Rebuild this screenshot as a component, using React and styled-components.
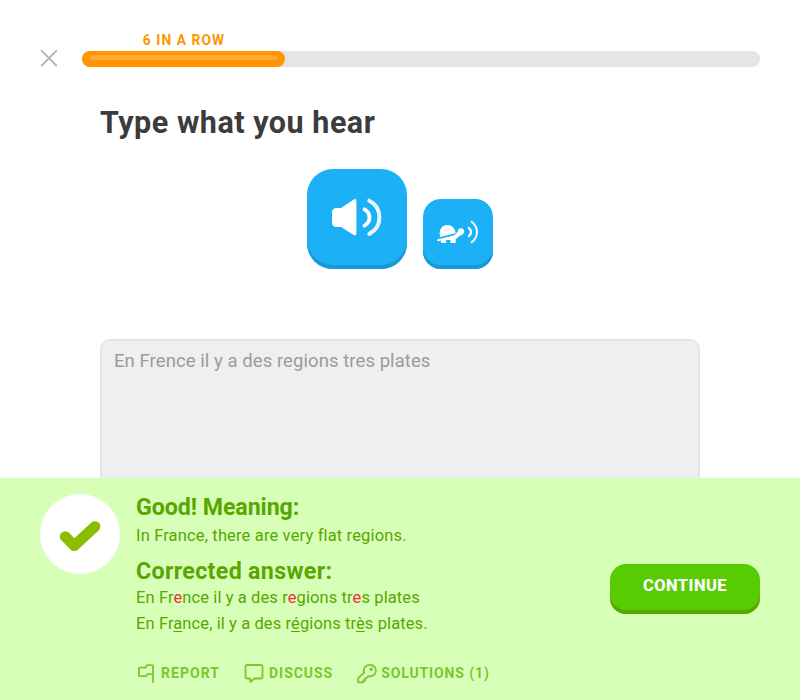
import React from "react";
import styled, { createGlobalStyle } from "styled-components";

const GlobalStyle = createGlobalStyle`
  * { box-sizing: border-box; }
  body { margin: 0; background: #fff; font-family: Roboto, "Liberation Sans", sans-serif; }
  button { border: 0; padding: 0; font-family: inherit; cursor: pointer; }
  h1, h2, p { margin: 0; white-space: nowrap; }
`;

const Page = styled.div`
  width: 800px;
  height: 700px;
  display: flex;
  flex-direction: column;
  overflow: hidden;
`;

const Header = styled.header`
  flex: none;
  display: flex;
  align-items: flex-end;
  gap: 24px;
  height: 67px;
  padding: 0 40px;
`;

const CloseButton = styled.button`
  width: 18px;
  height: 18px;
  background: none;
  svg { display: block; }
`;

const Progress = styled.div`
  flex: 1;
`;

const Streak = styled.div`
  width: 203px;
  padding: 0 0 3px 1px;
  text-align: center;
  font-size: 13.8px;
  line-height: 16px;
  font-weight: 700;
  letter-spacing: 1.08px;
  color: #ff9600;
`;

const Track = styled.div`
  height: 16px;
  border-radius: 8px;
  background: #e5e5e5;
`;

const Fill = styled.div`
  width: 203px;
  height: 16px;
  padding: 4px 8px;
  border-radius: 8px;
  background: #ff9600;
`;

const Shine = styled.div`
  height: 5px;
  border-radius: 3px;
  background: #ffab33;
`;

const Main = styled.main`
  flex: 1;
  min-height: 0;
  overflow: hidden;
  padding: 36px 100px 0;
`;

const Title = styled.h1`
  font-size: 30.5px;
  line-height: 40px;
  font-weight: 700;
  letter-spacing: 0.52px;
  color: #3c3c3c;
`;

const Speakers = styled.div`
  display: flex;
  justify-content: center;
  align-items: flex-end;
  gap: 16px;
  margin: 26px 0 70px;
`;

const SpeakerButton = styled.button`
  width: ${(p) => p.$size}px;
  height: ${(p) => p.$size}px;
  border-radius: ${(p) => p.$radius}px;
  background: #1cb0f6;
  box-shadow: inset 0 -4px 0 #1899d6;
  svg { display: block; }
`;

const Answer = styled.div`
  height: 200px;
  padding: 8px 12px;
  border: 2px solid #e5e5e5;
  border-radius: 10px;
  background: #efefef;
  color: #9b9b9b;
  font-size: 18.5px;
  line-height: 24px;
  letter-spacing: 0.07px;
  white-space: nowrap;
`;

const Feedback = styled.footer`
  flex: none;
  display: flex;
  height: 222px;
  padding: 16px 40px 0;
  background: #d7ffb8;
  color: #58a700;
`;

const Badge = styled.div`
  flex: none;
  width: 80px;
  height: 80px;
  margin-right: 16px;
  border-radius: 50%;
  background: #fff;
  svg { display: block; }
`;

const Details = styled.div`
  flex: 1;
`;

const Heading = styled.h2`
  font-size: 23.2px;
  line-height: ${(p) => p.$height}px;
  font-weight: 700;
  letter-spacing: ${(p) => p.$spacing}px;
`;

const Line = styled.p`
  font-size: 16.5px;
  line-height: 26px;
  letter-spacing: ${(p) => p.$spacing}px;
  padding-top: ${(p) => p.$before || 0}px;
  margin-bottom: ${(p) => p.$after || 0}px;
`;

const Wrong = styled.span`
  color: #f52f3a;
`;

const Fixed = styled.span`
  text-decoration: underline;
  text-decoration-thickness: 1px;
  text-underline-offset: 2px;
`;

const Actions = styled.div`
  display: flex;
  gap: 24px;
  margin-top: 26px;
`;

const Action = styled.button`
  display: flex;
  align-items: center;
  gap: ${(p) => p.$gap}px;
  height: 20px;
  background: none;
  color: #7ac62f;
  font-size: 14px;
  line-height: 20px;
  font-weight: 700;
  letter-spacing: ${(p) => p.$spacing}px;
  white-space: nowrap;
  svg { display: block; flex: none; overflow: visible; }
`;

const ContinueButton = styled.button`
  flex: none;
  width: 150px;
  height: 50px;
  margin-top: 70px;
  padding-bottom: 8px;
  border-radius: 16px;
  background: #58cc02;
  box-shadow: inset 0 -4px 0 #58a700;
  color: #fff;
  font-size: 16.5px;
  font-weight: 800;
  letter-spacing: 0.4px;
`;

const stroke = { fill: "none", stroke: "currentColor", strokeWidth: 1.8, strokeLinecap: "round", strokeLinejoin: "round" };

const CloseIcon = () => (
  <svg width="18" height="18" viewBox="0 0 18 18">
    <path d="M1.7 1.9 16.3 16.5M16.3 1.9 1.7 16.5" stroke="#b7b7b7" strokeWidth="2" strokeLinecap="round" />
  </svg>
);

const SpeakerIcon = () => (
  <svg width="100" height="100" viewBox="0 0 100 100" fill="none">
    <path d="M29 39h5l12.4-8.3q3-1.8 3 1.3v32.3q0 3.3-3 1.5L34 58h-5q-4-.5-4-4.5v-10q0-4 4-4.5z" fill="#fff" />
    <path d="M57.5 40.300c6.600 3.700 6.600 12.700 0 16.400" stroke="#fff" strokeWidth="3.800" strokeLinecap="round" />
    <path d="M62.300 31.700c13.500 6.800 13.500 26.400 0 33.200" stroke="#e8f7fe" strokeWidth="4" strokeLinecap="round" />
  </svg>
);

const TurtleIcon = () => (
  <svg width="70" height="70" viewBox="0 0 70 70" fill="none">
    <path d="M17.2 38C15.2 31.200 18.800 26 24.200 26c4.700 0 7.800 3.200 8.500 8.300z" fill="#fff" />
    <path d="M15.200 41.200 33 37.300" stroke="#fff" strokeWidth="2.200" strokeLinecap="round" />
    <path d="M18 40.200 31.500 36.300 36.500 31 40 35.200 36 37.300c-.8 1.300-1.900 2.100-3.300 2.600V44h-5.200v-3h-4.300v3H18z" fill="#fff" />
    <circle cx="38" cy="32.300" r="3.100" fill="#fff" />
    <path d="M45.800 29c3 2.200 3 5.900 0 8.100" stroke="#fff" strokeWidth="2.200" strokeLinecap="round" />
    <path d="M48.700 22.800c7 5.200 7 15.200 0 20.400" stroke="#e8f7fe" strokeWidth="2.100" strokeLinecap="round" />
  </svg>
);

const CheckIcon = () => (
  <svg width="80" height="80" viewBox="0 0 80 80">
    <path d="M25.2 42.5 34.2 51.7 55 32.5" fill="none" stroke="#8abd00" strokeWidth="10.700" strokeLinecap="round" strokeLinejoin="round" />
  </svg>
);

const FlagIcon = () => (
  <svg width="21" height="20" viewBox="0 0 21 20">
    <path d="M17 19V3.200q0-1-1-1h-4.600q-1 0-1.200 1l-.3 1.500H3.900q-1 0-1 1v6.500q0 1 1 1h5.700q.9 0 1.200-.8l.5-1.200H17" {...stroke} />
  </svg>
);

const BubbleIcon = () => (
  <svg width="20" height="20" viewBox="0 0 20 20">
    <path d="M3.500 2h13q2 0 2 2v9.500q0 2-2 2h-6L6.300 19v-3.500H3.500q-2 0-2-2V4q0-2 2-2z" {...stroke} />
  </svg>
);

const KeyIcon = () => (
  <svg width="20" height="20" viewBox="0 0 20 20">
    <path d="M1.200 19.300v-4.100L7.200 9.600C5.700 5.500 8.500 1.800 12.800 1.800c4 0 6.400 3 6.100 6.300-.4 3.800-3.700 5.800-7.600 5L9.500 15.300H8v2.200H6.300v1.800z" {...stroke} />
    <circle cx="14.200" cy="6.200" r="1.700" fill="currentColor" />
  </svg>
);

export default function App() {
  return (
    <Page>
      <GlobalStyle />
      <Header>
        <CloseButton aria-label="Close"><CloseIcon /></CloseButton>
        <Progress>
          <Streak>6 IN A ROW</Streak>
          <Track><Fill><Shine /></Fill></Track>
        </Progress>
      </Header>
      <Main>
        <Title>Type what you hear</Title>
        <Speakers>
          <SpeakerButton $size={100} $radius={26} aria-label="Play"><SpeakerIcon /></SpeakerButton>
          <SpeakerButton $size={70} $radius={18} aria-label="Play slowly"><TurtleIcon /></SpeakerButton>
        </Speakers>
        <Answer>En Frence il y a des regions tres plates</Answer>
      </Main>
      <Feedback>
        <Badge><CheckIcon /></Badge>
        <Details>
          <Heading $height={27} $spacing={-0.07}>Good! Meaning:</Heading>
          <Line $spacing={0.15} $before={2} $after={8}>In France, there are very flat regions.</Line>
          <Heading $height={28} $spacing={0.33}>Corrected answer:</Heading>
          <Line $spacing={0.1}>
            En Fr<Wrong>e</Wrong>nce il y a des r<Wrong>e</Wrong>gions tr<Wrong>e</Wrong>s plates
          </Line>
          <Line $spacing={0.1}>
            En Fr<Fixed>a</Fixed>nce, il y a des r<Fixed>é</Fixed>gions tr<Fixed>è</Fixed>s plates.
          </Line>
          <Actions>
            <Action $gap={4} $spacing={1.05}><FlagIcon />REPORT</Action>
            <Action $gap={5} $spacing={0.95}><BubbleIcon />DISCUSS</Action>
            <Action $gap={4} $spacing={0.88}><KeyIcon />SOLUTIONS (1)</Action>
          </Actions>
        </Details>
        <ContinueButton>CONTINUE</ContinueButton>
      </Feedback>
    </Page>
  );
}
